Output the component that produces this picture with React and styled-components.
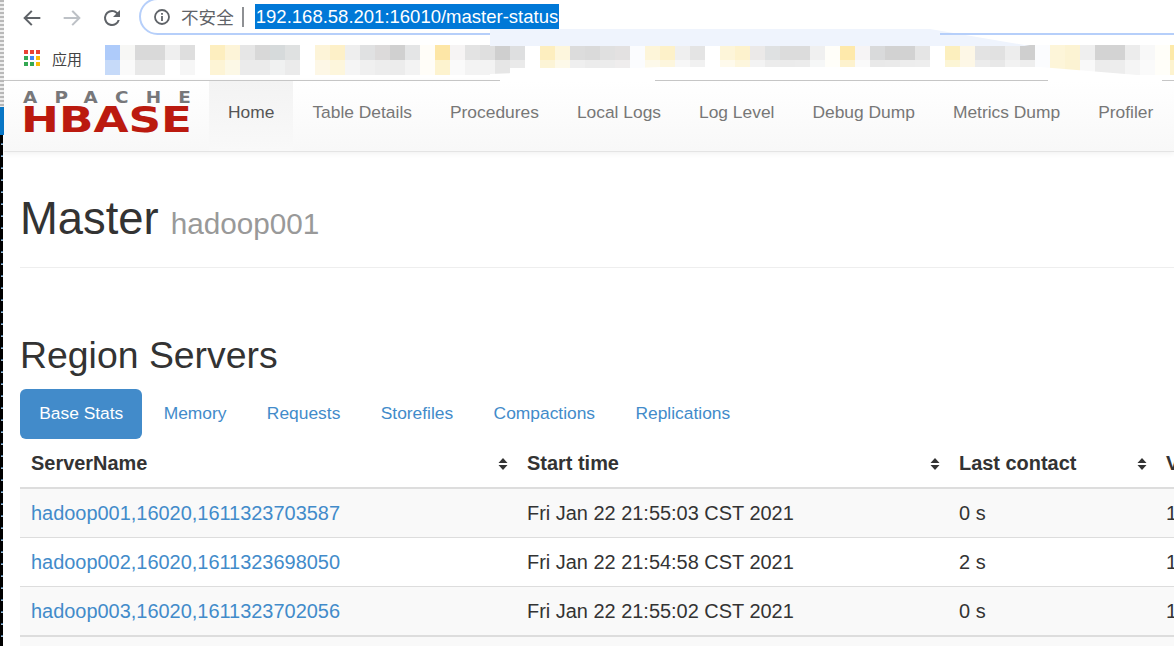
import React from 'react';
import styled, { createGlobalStyle } from 'styled-components';

const GlobalStyle = createGlobalStyle`
    html, body {
        margin: 0;
        padding: 0;
        background: #fff;
        overflow: hidden;
    }
    body {
        font-family: "Liberation Sans", Arial, sans-serif;
        color: #333;
    }
`;

const Screen = styled.div`
    width: 1174px;
    height: 646px;
    display: flex;
    overflow: hidden;
    position: relative;
    background: #fff;
`;

const DesktopEdge = styled.div`
    width: 4px;
    flex: none;
    display: flex;
    flex-direction: column;
`;

const EdgeWindow = styled.div`
    height: 107px;
    background: repeating-linear-gradient(180deg, #b9b9b9 0 2px, #eeeeee 2px 4px);
`;

const EdgeBlue = styled.div`
    height: 28px;
    background: #0a78c8;
`;

const EdgeDark = styled.div`
    flex: 1;
    margin-right: 1px;
    background-color: #000;
    background-image: repeating-linear-gradient(180deg, transparent 0 8px, #3f6a8e 8px 9px, #9db8cf 9px 10px, transparent 10px 12px);
    background-size: 2px 100%;
    background-position: 1px 0;
    background-repeat: no-repeat;
`;

const Main = styled.div`
    flex: 1;
    min-width: 0;
    display: flex;
    flex-direction: column;
`;

const Toolbar = styled.div`
    height: 45px;
    flex: none;
    display: flex;
    align-items: flex-start;
`;

const NavButton = styled.div`
    width: 40px;
    height: 35px;
    flex: none;
    display: flex;
    align-items: center;
    justify-content: center;
    color: ${(p) => (p.$off ? '#bdc1c6' : '#5f6368')};
`;

const NavButtons = styled.div`
    display: flex;
    padding-left: 8px;
`;

const Omnibox = styled.div`
    margin: -2px -40px 0 7px;
    flex: 1;
    height: 33px;
    border: 2px solid #b6cffa;
    border-radius: 20px 0 0 20px;
    display: flex;
    align-items: center;
    padding-left: 12px;
    background: #fff;
`;

const NotSecure = styled.span`
    margin-left: 10px;
    font-family: "Noto Sans CJK SC", "Liberation Sans", sans-serif;
    font-size: 17.6px;
    color: #5f6368;
    line-height: 25px;
`;

const Divider = styled.span`
    width: 2px;
    height: 20px;
    margin: 0 11px 0 8px;
    background: #8e9093;
`;

const Selected = styled.span`
    background: #0078d7;
    color: #fff;
    font-size: 18.5px;
    line-height: 25px;
    height: 25px;
    padding: 0 1px;
    white-space: nowrap;
`;

const BookmarkBar = styled.div`
    height: 35px;
    flex: none;
    display: flex;
    align-items: flex-start;
    overflow: hidden;
`;

const AppsButton = styled.div`
    display: flex;
    align-items: center;
    gap: 12px;
    width: 101px;
    flex: none;
    padding-left: 20px;
    box-sizing: border-box;
    height: 26px;
`;

const AppsGrid = styled.div`
    display: grid;
    grid-template-columns: repeat(3, 4px);
    grid-auto-rows: 4px;
    gap: 2px;
`;

const AppsDot = styled.i`
    display: block;
    background: ${(p) => p.$c};
`;

const AppsLabel = styled.span`
    font-family: "Noto Sans CJK SC", sans-serif;
    font-size: 15px;
    color: #444;
    white-space: nowrap;
`;

const BlurCell = styled.div`
    width: 15px;
    flex: none;
    display: flex;
    flex-direction: column;
`;

const BlurTop = styled.div`
    height: 15px;
    background: ${(p) => p.$c};
`;

const BlurBottom = styled.div`
    height: ${(p) => p.$h}px;
    background: ${(p) => p.$c};
`;

const Smudge = styled.svg`
    position: absolute;
    left: 0;
    top: 0;
    pointer-events: none;
`;

const NavBar = styled.nav`
    height: 70px;
    flex: none;
    display: flex;
    border-top: 1px solid #c6c6c6;
    border-bottom: 1px solid #e4e4e4;
    background: linear-gradient(180deg, #ffffff 0%, #f8f8f8 100%);
    box-shadow: 0 2px 5px rgba(0, 0, 0, 0.05);
`;

const Brand = styled.div`
    width: 205px;
    flex: none;
`;

const NavItem = styled.a`
    display: flex;
    align-items: center;
    height: 100%;
    padding: 0 19px 8px;
    box-sizing: border-box;
    font-size: 17.4px;
    white-space: nowrap;
    color: ${(p) => (p.$active ? '#555' : '#777')};
    background: ${(p) => (p.$active ? 'linear-gradient(180deg, #f3f3f3 0%, #f9f9f9 100%)' : 'none')};
`;

const Content = styled.div`
    padding: 0 0 0 16px;
    flex: 1;
`;

const PageHeader = styled.div`
    height: 116px;
    border-bottom: 1px solid #eee;
    box-sizing: border-box;
    display: flex;
    align-items: baseline;
    padding-top: 42px;
`;

const Title = styled.h1`
    margin: 0;
    font-size: 45.4px;
    line-height: 50px;
    font-weight: 400;
    color: #333;
`;

const Subtitle = styled.small`
    margin-left: 12px;
    font-size: 29.7px;
    color: #999;
`;

const SectionTitle = styled.h2`
    margin: 67px 0 13px;
    font-size: 37.4px;
    line-height: 41px;
    font-weight: 400;
    color: #333;
`;

const Tabs = styled.ul`
    display: flex;
    gap: 2px;
    list-style: none;
    margin: 0;
    padding: 0;
`;

const Tab = styled.li`
    height: 50px;
    box-sizing: border-box;
    display: flex;
    align-items: center;
    padding: 0 19.2px 2px;
    font-size: 17.4px;
    border-radius: 6px;
    color: ${(p) => (p.$active ? '#fff' : '#428bca')};
    background: ${(p) => (p.$active ? '#428bca' : 'transparent')};
`;

const Table = styled.table`
    width: 1200px;
    table-layout: fixed;
    border-collapse: separate;
    border-spacing: 0;
    margin-top: 1px;
    font-size: 19.95px;
`;

const HeadCell = styled.th`
    width: ${(p) => p.$w}px;
    height: 49px;
    padding: 0 8px 0 11px;
    box-sizing: border-box;
    text-align: left;
    font-weight: 700;
    color: #333;
    border-bottom: 2px solid #ddd;
    white-space: nowrap;
`;

const HeadInner = styled.div`
    display: flex;
    align-items: center;
    justify-content: space-between;
`;

const Row = styled.tr`
    background: ${(p) => (p.$odd ? '#f9f9f9' : '#fff')};
`;

const Cell = styled.td`
    height: ${(p) => (p.$last ? 50 : 49)}px;
    padding: 0 11px;
    box-sizing: border-box;
    white-space: nowrap;
    color: #333;
    border-bottom: ${(p) => (p.$last ? 2 : 1)}px solid #ddd;
`;

const FootCell = styled.td`
    height: 12px;
    padding: 0;
    background: #f9f9f9;
`;

const ServerLink = styled.a`
    color: #428bca;
`;

const Arrow = ({ d, color }) => (
    <svg width="22" height="22" viewBox="0 0 24 24" fill="none" stroke={color} strokeWidth="2.2" strokeLinecap="square">
        <path d={d} />
    </svg>
);

const InfoIcon = () => (
    <svg width="18" height="18" viewBox="0 0 18 18" fill="none" stroke="#5f6368" strokeWidth="1.8">
        <circle cx="9" cy="9" r="7" />
        <path d="M9 8v5" />
        <path d="M9 5v1.8" />
    </svg>
);

const ReloadIcon = () => (
    <svg width="24" height="24" viewBox="0 0 24 24" fill="#5f6368">
        <path d="M17.65 6.35A7.96 7.96 0 0 0 12 4a8 8 0 1 0 7.73 10h-2.08A6 6 0 1 1 12 6c1.66 0 3.14.69 4.22 1.78L13 11h7V4l-2.35 2.35z" />
    </svg>
);

const SortIcon = () => (
    <svg width="10" height="14" viewBox="0 0 10 14" fill="#333">
        <path d="M5 1 9.5 6h-9z" />
        <path d="M5 13 .5 8h9z" />
    </svg>
);

const Logo = () => (
    <svg width="205" height="70" viewBox="0 0 205 70" style={{ display: 'block' }}>
        <text
            transform="translate(19 22) scale(1.15 1)"
            textLength="146"
            lengthAdjust="spacing"
            fontFamily="DejaVu Sans"
            fontWeight="700"
            fontSize="16"
            fill="#77777a"
        >
            APACHE
        </text>
        <text
            x="17"
            y="51"
            textLength="171"
            lengthAdjust="spacingAndGlyphs"
            fontFamily="DejaVu Sans"
            fontWeight="700"
            fontSize="36"
            fill="#bb1a0f"
        >
            HBASE
        </text>
    </svg>
);

const appsColors = ['#ea4335', '#ea4335', '#ea4335', '#34a853', '#4285f4', '#fbbc05', '#34a853', '#34a853', '#fbbc05'];

// pairs of colours of the blurred bookmark row, 15px per cell
const blurred = [
    '#aecbfa,#c6daf9', '#f7f7f5,#fafafa', '#d9d9d9,#e8e8e8', '#d9d9d9,#e8e8e8', '#efefef,#fff', '#dedede,#f6f6f6', '#fff,#fff',
    '#fdeebf,#fdf4d5', '#fdf4d8,#fcf8e6', '#e6e6e6,#ebebeb', '#d8d8d8,#ebebeb', '#d6dadb,#f0f1f1', '#dfe1e1,#ebebeb', '#fff,#fff',
    '#fdf4d8,#fdf7e6', '#fdf0c8,#fdf6dc', '#eee,#f5f5f5', '#e0e1e2,#f0f0f0', '#dcdada,#ededed', '#d0d0d0,#ececec', '#e4e5e6,#f3f3f3',
    '#fffdf8,#fffdf8', '#fde6a6,#fdf3cf', '#f6f4f4,#fafafa', '#e3e3e3,#f3f3f3', '#dfdfdf,#f3f3f3', '#cfcfcf,#e6e6e6', '#dedfe0,#eaeaea',
    '#fff,#fff', '#fdeebf,#fcf4d6', '#fdf6dd,#fdf9e9', '#dcdcdc,#efefef', '#dadada,#ececec', '#e0e0e0,#ececec', '#e3e1e1,#efeded',
    '#fbfcfe,#fbfcfe', '#fdf5d9,#fdf9ea', '#fdf1c9,#fdf6dd', '#efefef,#f7f7f7', '#e4e4e4,#f1f1f1', '#fff,#fff', '#fdf5d9,#fefaec',
    '#fdf2cd,#fdf6dd', '#ebe9e8,#f3f3f3', '#dfe1e2,#ececec', '#dcdcdc,#ebebeb', '#dcdcdc,#ececec', '#f0f0f0,#f6f7f7', '#fffef9,#fffef9',
    '#fee9ab,#fdf2ce', '#f6f4f5,#fafafa', '#d9dadb,#e9e9e9', '#d2d2d2,#eaeaea', '#d2d2d2,#ededed', '#e5e5e5,#eeeeee', '#fff,#fff',
    '#fcefbe,#fcf5d5', '#fdf7e6,#fdf7e6', '#e3e3e3,#ececec', '#e1e1e1,#e8e8e8', '#ededed,#f2f2f2', '#cfcfcf,#eeeeee', '#fbfcfe,#fbfcfe',
    '#fdf5d9,#fdf5d9', '#fcf3d3,#fcf3d3', '#efefef,#f9f9f9', '#d3d3d3,#ececec', '#d3d3d3,#ededed', '#ececec,#f5f5f5', '#f8f8f8,#fafafa',
    '#fffef9,#fffef9', '#fde9a8,#fdf3cf',
];

const navItems = ['Home', 'Table Details', 'Procedures', 'Local Logs', 'Log Level', 'Debug Dump', 'Metrics Dump', 'Profiler'];
const tabs = ['Base Stats', 'Memory', 'Requests', 'Storefiles', 'Compactions', 'Replications'];

const servers = [
    { name: 'hadoop001,16020,1611323703587', start: 'Fri Jan 22 21:55:03 CST 2021', contact: '0 s' },
    { name: 'hadoop002,16020,1611323698050', start: 'Fri Jan 22 21:54:58 CST 2021', contact: '2 s' },
    { name: 'hadoop003,16020,1611323702056', start: 'Fri Jan 22 21:55:02 CST 2021', contact: '0 s' },
];

export default function App() {
    return (
        <Screen>
            <GlobalStyle />
            <DesktopEdge>
                <EdgeWindow />
                <EdgeBlue />
                <EdgeDark />
            </DesktopEdge>
            <Main>
                <Toolbar>
                    <NavButtons>
                        <NavButton><Arrow d="M20 12H5M11 5l-7 7 7 7" color="#5f6368" /></NavButton>
                        <NavButton $off><Arrow d="M4 12h15M13 5l7 7-7 7" color="#bdc1c6" /></NavButton>
                        <NavButton><ReloadIcon /></NavButton>
                    </NavButtons>
                    <Omnibox>
                        <InfoIcon />
                        <NotSecure>不安全</NotSecure>
                        <Divider />
                        <Selected>192.168.58.201:16010/master-status</Selected>
                    </Omnibox>
                </Toolbar>
                <BookmarkBar>
                    <AppsButton>
                        <AppsGrid>
                            {appsColors.map((c, i) => <AppsDot key={i} $c={c} />)}
                        </AppsGrid>
                        <AppsLabel>应用</AppsLabel>
                    </AppsButton>
                    {blurred.map((pair, i) => {
                        const [top, bottom] = pair.split(',');
                        return (
                            <BlurCell key={i}>
                                <BlurTop $c={top} />
                                <BlurBottom $c={bottom} $h={i > 26 && i < 48 ? 8 : 15} />
                            </BlurCell>
                        );
                    })}
                </BookmarkBar>
                <NavBar>
                    <Brand><Logo /></Brand>
                    {navItems.map((item, i) => (
                        <NavItem key={item} $active={i === 0}>{item}</NavItem>
                    ))}
                </NavBar>
                <Content>
                    <PageHeader>
                        <Title>Master</Title>
                        <Subtitle>hadoop001</Subtitle>
                    </PageHeader>
                    <SectionTitle>Region Servers</SectionTitle>
                    <Tabs>
                        {tabs.map((t, i) => <Tab key={t} $active={i === 0}>{t}</Tab>)}
                    </Tabs>
                    <Table>
                        <thead>
                            <tr>
                                <HeadCell $w={496}><HeadInner>ServerName<SortIcon /></HeadInner></HeadCell>
                                <HeadCell $w={432}><HeadInner>Start time<SortIcon /></HeadInner></HeadCell>
                                <HeadCell $w={207}><HeadInner>Last contact<SortIcon /></HeadInner></HeadCell>
                                <HeadCell $w={65}>V</HeadCell>
                            </tr>
                        </thead>
                        <tbody>
                            {servers.map((s, i) => {
                                const last = i === servers.length - 1;
                                return (
                                    <Row key={s.name} $odd={i % 2 === 0}>
                                        <Cell $last={last}><ServerLink>{s.name}</ServerLink></Cell>
                                        <Cell $last={last}>{s.start}</Cell>
                                        <Cell $last={last}>{s.contact}</Cell>
                                        <Cell $last={last}>1</Cell>
                                    </Row>
                                );
                            })}
                        </tbody>
                        <tfoot>
                            <tr><FootCell colSpan={4} /></tr>
                        </tfoot>
                    </Table>
                </Content>
            </Main>
            <Smudge width="1174" height="90" viewBox="0 0 1174 90">
                <path d="M490 29 H930 L1030 46 H490 Z" fill="#eff4fd" />
                <path d="M940 33 H1174 V35 H940 Z" fill="#b6cffa" />
                <path d="M490 74 L660 67 L1040 67 L1174 78 V80 H490 Z" fill="#fff" />
                <path d="M500 80 H655 V81 H500 Z M1048 80 H1162 V81 H1048 Z" fill="#fff" />
            </Smudge>
        </Screen>
    );
}
